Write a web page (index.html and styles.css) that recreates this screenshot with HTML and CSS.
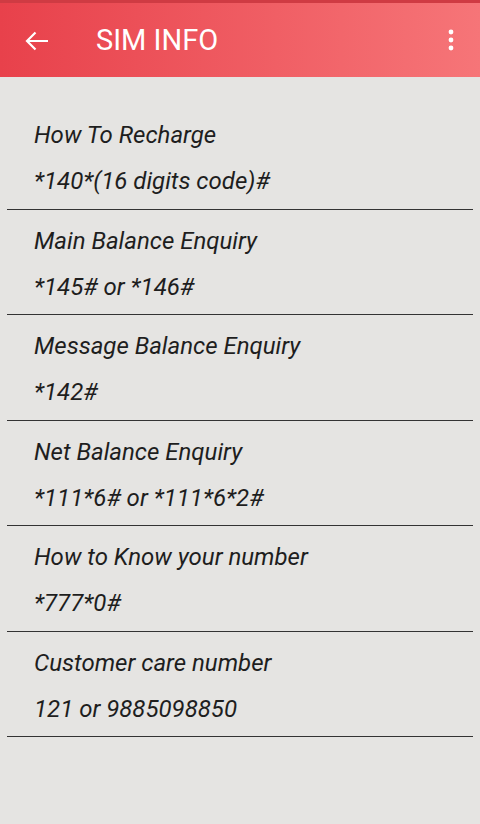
FILE: index.html
```html
<!DOCTYPE html>
<html lang="en">
<head>
    <meta charset="UTF-8">
    <meta name="viewport" content="width=device-width, initial-scale=1.0">
    <title>SIM INFO</title>
    <link rel="stylesheet" href="styles.css">
</head>
<body>
    <header class="app-bar">
        <svg class="back-icon" width="24" height="20" viewBox="0 0 24 20">
            <path d="M23 10H2M10.5 1.5L2 10l8.5 8.5" fill="none" stroke="#fff" stroke-width="2.2"/>
        </svg>
        <h1 class="title">SIM INFO</h1>
        <svg class="menu-icon" width="24" height="24" viewBox="0 0 24 24">
            <circle cx="12" cy="4" r="2.4" fill="#fff"/>
            <circle cx="12" cy="12" r="2.4" fill="#fff"/>
            <circle cx="12" cy="20" r="2.4" fill="#fff"/>
        </svg>
    </header>

    <div class="info-list">
        <div class="info-row">
            <p class="info-title">How To Recharge</p>
            <p class="info-value">*140*(16 digits code)#</p>
        </div>
        <div class="info-row">
            <p class="info-title">Main Balance Enquiry</p>
            <p class="info-value">*145# or *146#</p>
        </div>
        <div class="info-row">
            <p class="info-title">Message Balance Enquiry</p>
            <p class="info-value">*142#</p>
        </div>
        <div class="info-row">
            <p class="info-title">Net Balance Enquiry</p>
            <p class="info-value">*111*6# or *111*6*2#</p>
        </div>
        <div class="info-row">
            <p class="info-title">How to Know your number</p>
            <p class="info-value">*777*0#</p>
        </div>
        <div class="info-row">
            <p class="info-title">Customer care number</p>
            <p class="info-value">121 or 9885098850</p>
        </div>
    </div>
</body>
</html>
```

FILE: styles.css
```css
body {
    margin: 0;
    padding: 0;
    font-family: Roboto, "Noto Sans", sans-serif;
    background-color: #e5e4e2;
    min-height: 824px;
}

.app-bar {
    height: 74px;
    display: flex;
    align-items: center;
    background: linear-gradient(to right, #e8414b, #f67578);
    border-top: 3px solid #cf3b43;
    color: #fff;
}

.back-icon {
    margin-left: 25px;
    margin-top: 1px;
}

.title {
    margin: 0 0 0 47px;
    font-size: 29px;
    font-weight: 400;
    flex: 1;
}

.menu-icon {
    margin-right: 17px;
}

.info-list {
    padding-top: 27px;
}

.info-row {
    margin: 0 7px;
    padding: 8px 27px 4.5px;
    border-bottom: 1px solid #333;
}

.info-title, .info-value {
    margin: 0;
    font-size: 24px;
    font-style: italic;
    line-height: 46px;
    color: #1e1e1e;
}
```
